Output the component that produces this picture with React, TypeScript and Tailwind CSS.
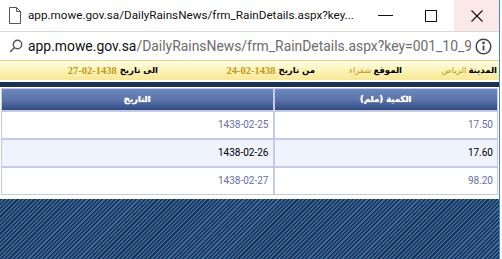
import React from "react";

const rows = [
  { amount: "17.50", date: "1438-02-25", alt: false },
  { amount: "17.60", date: "1438-02-26", alt: true },
  { amount: "98.20", date: "1438-02-27", alt: false },
];

function PageIcon() {
  return (
    <svg width="14" height="17" viewBox="0 0 14 17" fill="none" stroke="#555" strokeWidth="1">
      <path d="M1.5 0.5h7l4 4v12h-11z" />
      <path d="M8.5 0.5v4h4" />
    </svg>
  );
}

function SearchIcon() {
  return (
    <svg width="14" height="14" viewBox="0 0 14 14" fill="none" stroke="#555" strokeWidth="1.4">
      <circle cx="8.5" cy="5.5" r="4.2" />
      <path d="M5.5 8.5L1 13" />
    </svg>
  );
}

function InfoIcon() {
  return (
    <svg width="17" height="17" viewBox="0 0 17 17" fill="none" stroke="#444" strokeWidth="1.5">
      <circle cx="8.5" cy="8.5" r="7.3" />
      <path d="M8.5 7.5v5" strokeWidth="1.8" />
      <circle cx="8.5" cy="4.9" r="0.6" fill="#444" />
    </svg>
  );
}

function InfoBar() {
  const label = "font-bold text-black";
  const value = "text-[#c29a1c]";
  const num = "font-bold text-[#c29a1c] font-['Liberation_Serif',serif] text-[10.5px]";
  return (
    <div
      dir="rtl"
      className="h-[20px] flex items-center border-t border-[#e4d889] bg-linear-to-b from-[#fffce6] via-[#fcf3b8] to-[#f7e893] text-[8.5px] font-['DejaVu_Sans',sans-serif] pr-[2px]"
    >
      <div className="w-[95px] flex gap-[2px]">
        <span className={label}>المدينة</span>
        <span className={value}>الرياض</span>
      </div>
      <div className="w-[87px] flex gap-[2px]">
        <span className={label}>الموقع</span>
        <span className={value}>شقراء</span>
      </div>
      <div className="w-[157px] flex items-center gap-[3px]">
        <span className={label}>من تاريخ</span>
        <span dir="ltr" className={num}>24-02-1438</span>
      </div>
      <div className="flex items-center gap-[3px]">
        <span className={label}>الى تاريخ</span>
        <span dir="ltr" className={num}>27-02-1438</span>
      </div>
    </div>
  );
}

export default function App() {
  return (
    <div className="w-[502px] h-[259px] overflow-hidden bg-white flex font-['Roboto',sans-serif]">
      <div className="w-[500px] h-full flex flex-col border-r border-[#4a86c5]">
        {/* window title bar */}
        <div className="h-[31px] flex items-center shrink-0">
          <div className="w-[28px] flex justify-center pl-[2px]">
            <PageIcon />
          </div>
          <div className="flex-1 text-[11.7px] text-[#111] whitespace-nowrap">
            app.mowe.gov.sa/DailyRainsNews/frm_RainDetails.aspx?key...
          </div>
          <div className="w-[46px] h-full flex items-center justify-center">
            <div className="w-[15px] h-px bg-[#111]" />
          </div>
          <div className="w-[46px] h-full flex items-center justify-center">
            <div className="w-[12px] h-[12px] border border-[#111]" />
          </div>
          <div className="w-[45px] h-full flex items-center justify-center bg-[#fbe9e9]">
            <svg width="12" height="12" viewBox="0 0 12 12" stroke="#111" strokeWidth="1.1">
              <path d="M0.5 0.5l11 11M11.5 0.5l-11 11" />
            </svg>
          </div>
        </div>

        {/* address bar */}
        <div className="h-[29px] flex items-center shrink-0 border-t border-[#d9d9d9]">
          <div className="w-[28px] flex justify-center pl-[3px]">
            <SearchIcon />
          </div>
          <div className="flex-1 overflow-hidden whitespace-nowrap text-[13.9px] text-[#6d6d6d]">
            <span className="text-[#111]">app.mowe.gov.sa</span>/DailyRainsNews/frm_RainDetails.aspx?key=001_10_99
          </div>
          <div className="w-[24px] flex justify-center mr-[4px]">
            <InfoIcon />
          </div>
        </div>

        {/* page */}
        <div className="flex-1 flex flex-col">
          <InfoBar />
          <div className="h-[2px] bg-white" />
          <div className="h-[5px] bg-[#1c3050]" />
          <div className="h-px bg-white" />
          <div className="px-[1px] bg-white pb-[4px]">
            <table dir="rtl" className="w-full border-collapse border border-[#c6c9e3] font-['DejaVu_Sans',sans-serif]">
              <thead>
                <tr className="h-[22px] bg-linear-to-b from-[#6e88bd] via-[#5a74aa] to-[#2d477c] text-white text-[8.5px] font-bold">
                  <th className="w-[224px] border-l-2 border-[#c6cde6] font-bold [text-shadow:0_0_1px_#fff]">الكمية (ملم)</th>
                  <th className="font-bold [text-shadow:0_0_1px_#fff]">التاريخ</th>
                </tr>
              </thead>
              <tbody className="font-['Roboto',sans-serif] text-[10px]">
                {rows.map((r) => (
                  <tr
                    key={r.date}
                    className={
                      "h-[28px] border-t-2 border-[#c6c9e3] " +
                      (r.alt ? "bg-[#eef3fe] text-black" : "bg-white text-[#6a6e9e]")
                    }
                  >
                    <td className="text-right pr-[4px] border-l-2 border-[#c6c9e3]">{r.amount}</td>
                    <td dir="ltr" className="text-right pr-[4px]">{r.date}</td>
                  </tr>
                ))}
              </tbody>
            </table>
          </div>
          <div className="flex-1 bg-[repeating-linear-gradient(135deg,#1b3355_0px,#1b3355_1.5px,#3a679c_1.5px,#3a679c_3px)]" />
        </div>
      </div>
    </div>
  );
}
